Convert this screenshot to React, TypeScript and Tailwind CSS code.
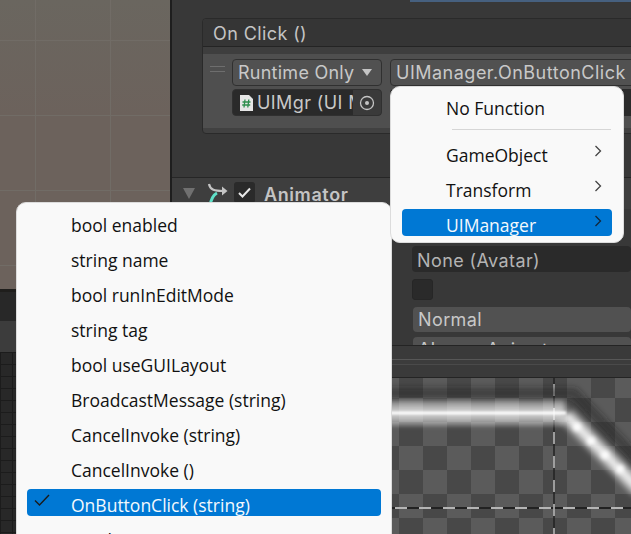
const uiFont = "font-['Inter','Liberation_Sans',sans-serif]";

function Chevron() {
  return (
    <svg className="absolute right-[9px] top-[5px] w-[10px] h-[14px]" viewBox="0 0 10 14" fill="none" stroke="currentColor" strokeWidth="1.3">
      <path d="M2.5 2 L7.5 7 L2.5 12" />
    </svg>
  );
}

function MenuItem({ label, active, arrow, checked }: { label: string; active?: boolean; arrow?: boolean; checked?: boolean }) {
  return (
    <div
      className={`relative h-[27px] shrink-0 pl-11 rounded-[4px] text-[17.5px] leading-[32px] whitespace-nowrap ${
        active ? "bg-[#0078d4] text-[#f4f9fd]" : "text-[#111111]"
      }`}
    >
      {checked && (
        <svg className="absolute left-[7px] top-[4px] w-[16px] h-[14px]" viewBox="0 0 16 14" fill="none" stroke="#1a1a1a" strokeWidth="1.4">
          <path d="M1 7.5 L5.5 12 L15 2" />
        </svg>
      )}
      {label}
      {arrow && (
        <span className={active ? "text-[#12263a]" : "text-[#444444]"}>
          <Chevron />
        </span>
      )}
    </div>
  );
}

function ScriptIcon() {
  return (
    <svg className="w-[15px] h-[16px] shrink-0" viewBox="0 0 15 16">
      <path d="M1 0 H10 L14 4 V16 H1 Z" fill="#e6e6e6" />
      <g stroke="#2f8f4e" strokeWidth="1.3">
        <path d="M6 4.5 L5 12.5 M9.8 4.5 L8.8 12.5 M3.5 7 H11.5 M3.2 10 H11.2" />
      </g>
    </svg>
  );
}

function AnimatorIcon() {
  return (
    <svg className="w-[24px] h-[26px] shrink-0" viewBox="0 0 24 26" fill="none">
      <path d="M3 2 C4 8 9 9 17 9" stroke="#c4c4c4" strokeWidth="2.2" />
      <path d="M16 4.5 L21.5 9 L16 13.5 Z" fill="#c4c4c4" />
      <path d="M11 11 C7 13 5 17 4 24" stroke="#5fe0c8" strokeWidth="3" />
    </svg>
  );
}

function OnClickBox() {
  return (
    <div className="mt-4 ml-[30px] w-[520px] h-[116px] shrink-0 rounded-[4px] border border-[#2a2a2a] bg-[#414141] flex flex-col tracking-[0.4px]">
      <div className="h-[28px] bg-[#353535] border-b border-[#242424] rounded-t-[4px] pl-[10px] text-[18px] leading-[29px] text-[#c4c4c4]">On Click ()</div>
      <div className="h-[7px] bg-[#3e3e3e]" />
      <div className="h-[74px] bg-[#4f4f4f] pl-[29px] pt-[5px] relative">
        <div className="absolute left-[7px] top-[12px] w-[15px] h-[6px] border-y border-[#6e6e6e]" />
        <div className="flex gap-2">
          <div className="w-[150px] h-[27px] rounded-[4px] border border-[#303030] bg-[#515151] flex items-center pl-[5px] text-[18px] tracking-[0.25px] text-[#c8c8c8] relative">
            Runtime Only
            <span className="absolute right-[9px] top-[9px] border-x-[5.5px] border-x-transparent border-t-[7px] border-t-[#c4c4c4]" />
          </div>
          <div className="w-[320px] h-[27px] rounded-[4px] border border-[#303030] bg-[#515151] flex items-center pl-[5px] text-[18px] tracking-[0.5px] text-[#c8c8c8]">
            UIManager.OnButtonClick
          </div>
        </div>
        <div className="flex gap-2 mt-[3px]">
          <div className="w-[150px] h-[27px] rounded-[4px] border border-[#303030] bg-[#2a2a2a] flex items-center pl-[6px] gap-[3px] text-[18px] text-[#c8c8c8] relative overflow-hidden">
            <ScriptIcon />
            <span className="whitespace-nowrap">UIMgr (UI Manager)</span>
            <div className="absolute right-0 top-0 bottom-0 w-[28px] bg-[#3a3a3a] flex items-center justify-center">
              <svg className="w-[16px] h-[16px]" viewBox="0 0 16 16" fill="none">
                <circle cx="8" cy="8" r="6.5" stroke="#c4c4c4" strokeWidth="1.3" />
                <circle cx="8" cy="8" r="2" fill="#c4c4c4" />
              </svg>
            </div>
          </div>
          <div className="w-[320px] h-[27px] bg-[#2a2a2a] rounded-[4px]" />
        </div>
      </div>
    </div>
  );
}

function Glow() {
  return (
    <svg className="absolute inset-0 w-full h-full" viewBox="172 378 459 156" fill="none">
      <defs>
        <filter id="b3" filterUnits="userSpaceOnUse" x="100" y="340" width="600" height="260"><feGaussianBlur stdDeviation="3" /></filter>
        <filter id="b2" filterUnits="userSpaceOnUse" x="100" y="340" width="600" height="260"><feGaussianBlur stdDeviation="2" /></filter>
        <filter id="b1" filterUnits="userSpaceOnUse" x="100" y="340" width="600" height="260"><feGaussianBlur stdDeviation="1" /></filter>
      </defs>
      {/* pivot guide lines */}
      <path d="M172 508 H631" stroke="#222222" strokeWidth="2" />
      <path d="M395 508 H631" stroke="#b4b4b4" strokeWidth="2" strokeDasharray="12 12" />
      <path d="M554 378 V534" stroke="#222222" strokeWidth="1.5" />
      <path d="M554 384 V534" stroke="#c4c4c4" strokeWidth="1.5" strokeDasharray="12 12" />
      {/* shadow above the band */}
      <path d="M172 393 H574 L640 462" stroke="#1e1e1e" strokeOpacity="0.5" strokeWidth="10" filter="url(#b3)" />
      <path d="M172 413 H564" stroke="#ffffff" strokeOpacity="0.3" strokeWidth="26" filter="url(#b2)" />
      <path d="M172 413 H566" stroke="#ffffff" strokeOpacity="0.55" strokeWidth="15" filter="url(#b3)" />
      <path d="M172 413 H566" stroke="#ffffff" strokeWidth="3" filter="url(#b1)" />
      <path d="M566 415 L640 490" stroke="#ffffff" strokeOpacity="0.65" strokeWidth="16" filter="url(#b3)" />
      <path d="M566 415 L640 490" stroke="#ffffff" strokeOpacity="0.6" strokeWidth="6" filter="url(#b2)" />
      <g fill="#ffffff" filter="url(#b2)">
        <circle cx="577" cy="427" r="4" />
        <circle cx="591" cy="441" r="4" />
        <circle cx="605" cy="455" r="4" />
        <circle cx="620" cy="469" r="4" />
      </g>
    </svg>
  );
}

export default function App() {
  return (
    <div className={`relative w-[631px] h-[534px] overflow-hidden flex bg-[#383838] ${uiFont}`}>
      {/* scene + grid column */}
      <div className="w-[170px] shrink-0 flex flex-col">
        <div className="h-[289px] bg-[#6b635d] [background-image:linear-gradient(#716c66_1px,transparent_1px),linear-gradient(90deg,#716c66_1px,transparent_1px),linear-gradient(#6a665f,#6c625c_40%)] [background-size:75px_75px,75px_75px,100%_100%] [background-position:35px_40px,35px_40px,0_0]" />
        <div className="h-[3px] bg-[#1f1e1c]" />
        <div className="h-[29px] bg-[#282828]" />
        <div className="h-[31px] bg-[#3c3c3c]" />
        <div className="flex-1 bg-[#282828] [background-image:linear-gradient(#1c1c1c_1px,transparent_1px),linear-gradient(90deg,#1c1c1c_1px,transparent_1px)] bg-[size:12px_12px]" />
      </div>
      <div className="w-[2px] shrink-0 bg-[#1e1e1e]" />

      {/* inspector column */}
      <div className="flex-1 min-w-0 flex flex-col overflow-hidden">
        <div className="h-[345px] shrink-0 flex flex-col overflow-hidden">
          <div className="h-[2px] shrink-0 ml-[238px] bg-[#46607f]" />
          <OnClickBox />
          <div className="mt-[43px] shrink-0 h-[32px] border-t border-[#262626] bg-[#3e3e3e] flex items-start pl-[9px] pt-[4px] relative">
            <span className="mt-[6px] ml-[2px] border-x-[6.5px] border-x-transparent border-t-[11px] border-t-[#707070]" />
            <div className="ml-[11px]"><AnimatorIcon /></div>
            <div className="ml-[4px] w-[21px] h-[21px] rounded-[3px] bg-[#2a2a2a] flex items-center justify-center">
              <svg className="w-[13px] h-[11px]" viewBox="0 0 13 11" fill="none" stroke="#e8e8e8" strokeWidth="2">
                <path d="M1 6 L4.5 9.5 L12 1.5" />
              </svg>
            </div>
            <span className="ml-[9px] font-semibold text-[18px] leading-[26px] tracking-[0.6px] text-[#c4c4c4]">Animator</span>
          </div>
          <div className="mt-[37px] ml-[240px] flex flex-col shrink-0 tracking-[0.4px]">
            <div className="h-[26px] rounded-[4px] bg-[#2a2a2a] pl-[5px] text-[18px] leading-[29px] text-[#b4b4b4] whitespace-nowrap">None (Avatar)</div>
            <div className="mt-[7px] w-[21px] h-[21px] rounded-[3px] bg-[#2a2a2a] border border-[#262626]" />
            <div className="mt-[7px] ml-[1px] h-[25px] rounded-[4px] bg-[#515151] pl-[5px] text-[18px] leading-[26px] text-[#c8c8c8]">Normal</div>
            <div className="mt-[5px] ml-[1px] h-[25px] rounded-[4px] bg-[#515151] pl-[5px] text-[18px] leading-[26px] text-[#c8c8c8] whitespace-nowrap">Always Animate</div>
          </div>
        </div>
        {/* sprite editor header */}
        <div className="h-[33px] shrink-0 bg-[#3a3a3a] border-y border-[#242424] flex flex-col pt-[13px]">
          <div className="h-[1px] bg-[#575757]" />
          <div className="h-[4px] bg-[#3c3c3c]" />
          <div className="h-[1px] bg-[#4a4a4a]" />
        </div>
        {/* sprite preview */}
        <div className="relative flex-1 bg-[image:repeating-conic-gradient(#5b5b5b_0_25%,#484848_0_50%)] bg-[size:48px_48px] bg-[position:227px_-4px]">
          <Glow />
        </div>
      </div>

      {/* popup: UIManager methods */}
      <div className="absolute left-[16px] top-[202px] w-[376px] h-[360px] rounded-[10px] border border-[#dcdcdc] bg-[#f9f9f9] flex flex-col gap-2 pt-[6px] px-[10px] font-['Open_Sans','Noto_Sans',sans-serif]">
        <MenuItem label="bool enabled" />
        <MenuItem label="string name" />
        <MenuItem label="bool runInEditMode" />
        <MenuItem label="string tag" />
        <MenuItem label="bool useGUILayout" />
        <MenuItem label="BroadcastMessage (string)" />
        <MenuItem label="CancelInvoke (string)" />
        <MenuItem label="CancelInvoke ()" />
        <MenuItem label="OnButtonClick (string)" active checked />
        <MenuItem label="SendMessage (string)" />
      </div>

      {/* popup: function categories */}
      <div className="absolute left-[390px] top-[86px] w-[234px] rounded-[10px] border border-[#dcdcdc] bg-[#f9f9f9] flex flex-col pt-[5px] pb-[6px] px-[11px] font-['Open_Sans','Noto_Sans',sans-serif]">
        <MenuItem label="No Function" />
        <div className="ml-[50px] mr-[1px] mt-[10px] mb-[9px] h-[1px] bg-[#d6d6d6]" />
        <div className="flex flex-col gap-2">
          <MenuItem label="GameObject" arrow />
          <MenuItem label="Transform" arrow />
          <MenuItem label="UIManager" active arrow />
        </div>
      </div>
    </div>
  );
}
